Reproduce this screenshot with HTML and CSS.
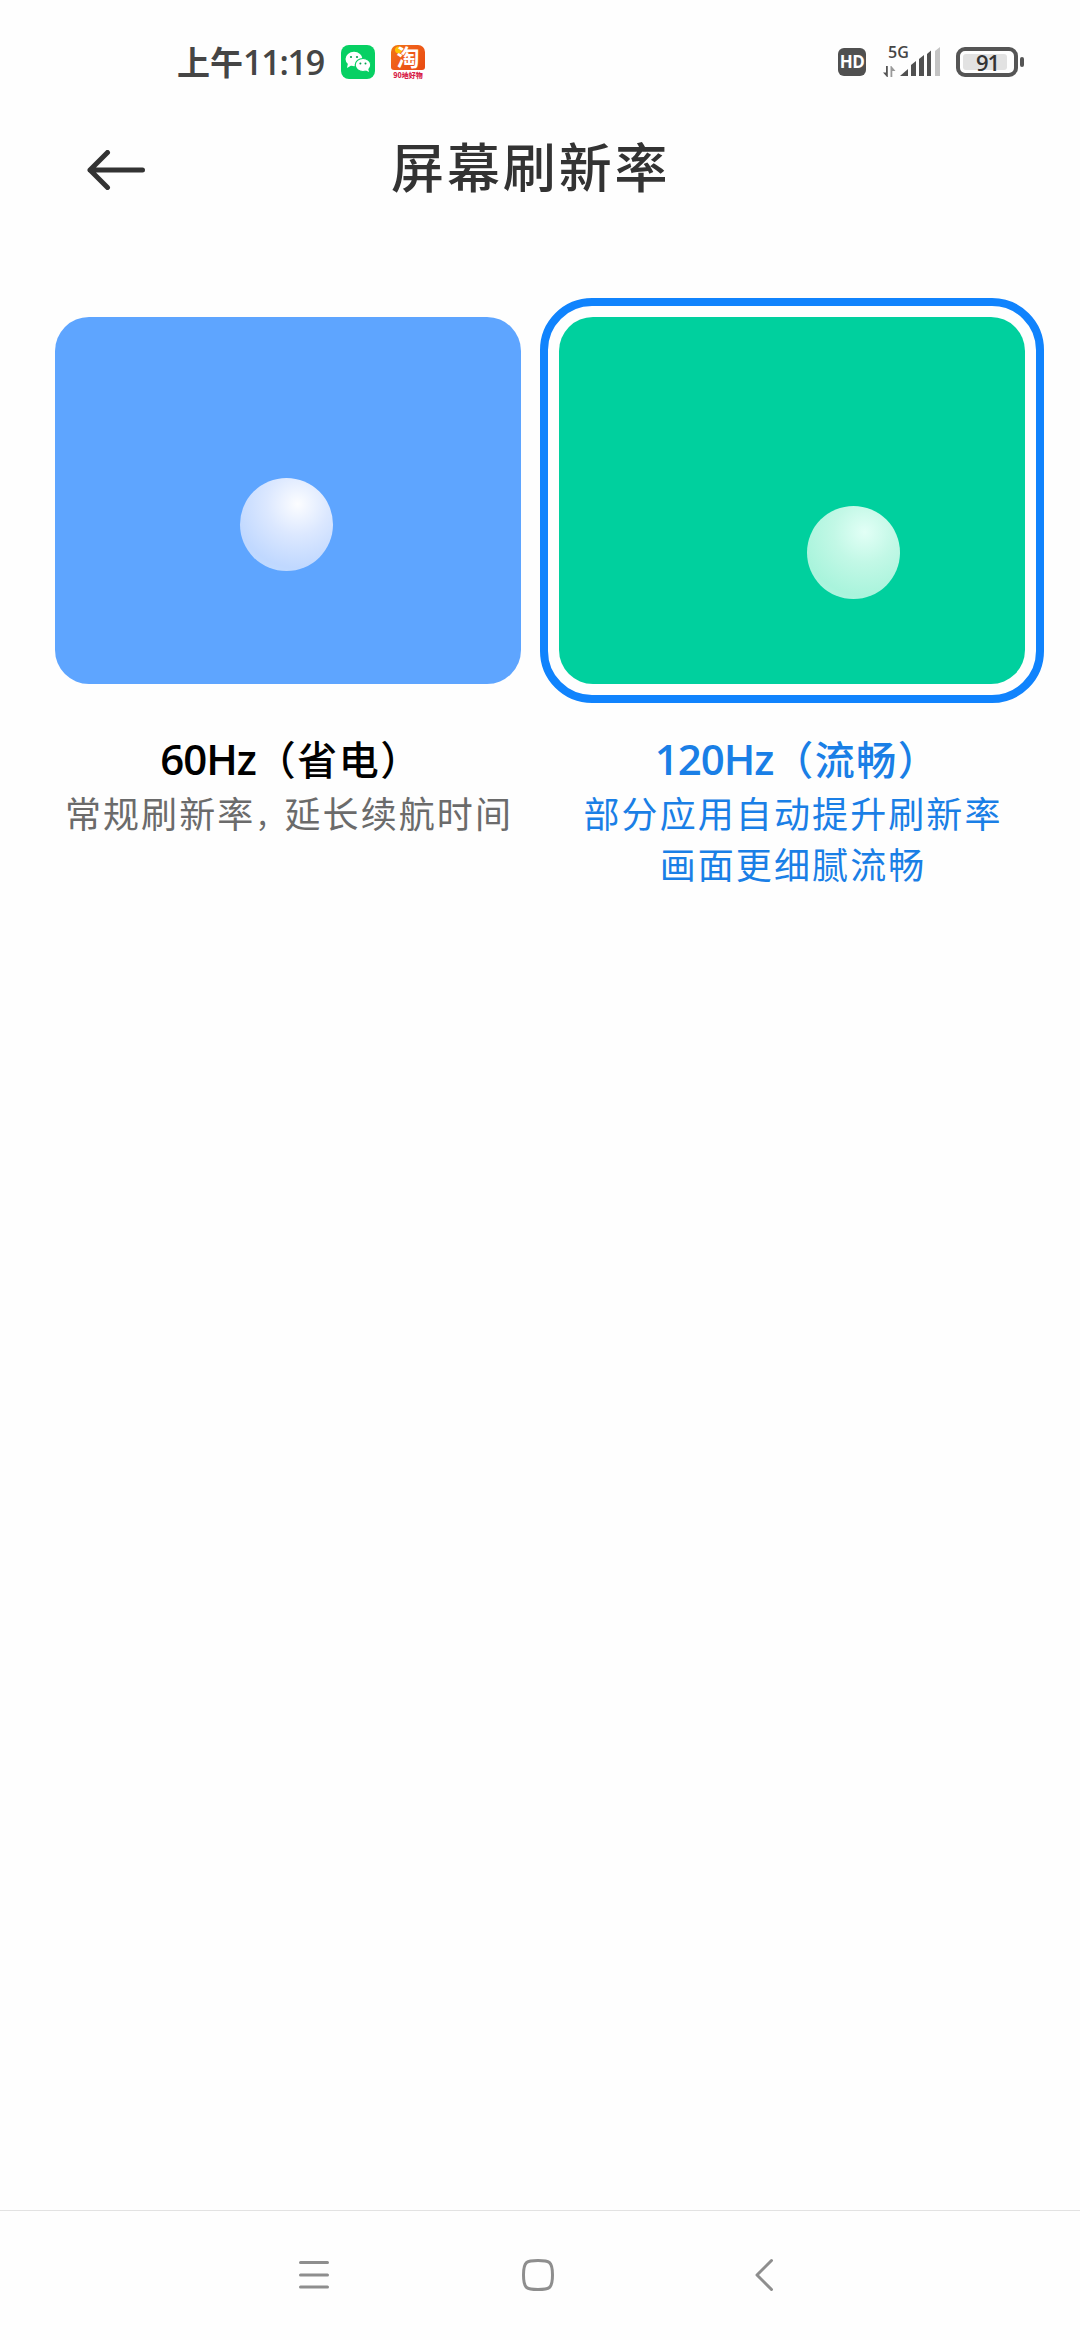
FILE: index.html
```html
<!DOCTYPE html>
<html lang="zh-CN">
  <head>
    <meta charset="UTF-8" />
    <meta name="viewport" content="width=device-width, initial-scale=1.0" />
    <title>屏幕刷新率</title>
    <link rel="stylesheet" href="styles.css">
  </head>
  <body>
    <div class="status-bar">
      <div class="status-left">
        <span class="time">上午<span class="num">11:19</span></span>
        <svg class="app-icon" viewBox="0 0 34 34">
          <rect width="34" height="34" rx="8" fill="#07d063" />
          <ellipse cx="13" cy="14" rx="8.5" ry="7.2" fill="#fff" />
          <path d="M7 18l-1 5 5-3z" fill="#fff" />
          <ellipse cx="22" cy="20" rx="7.8" ry="6.5" fill="#fff" stroke="#07d063" stroke-width="1.2" />
          <path d="M24 25l4 2-1-4z" fill="#fff" />
          <g fill="#07a050">
            <circle cx="10" cy="12" r="1.1" />
            <circle cx="16" cy="12" r="1.1" />
            <circle cx="19.4" cy="18.4" r="1" />
            <circle cx="24.5" cy="18.4" r="1" />
          </g>
        </svg>
        <div class="taobao">
          <div class="taobao-logo">淘</div>
          <div class="taobao-text">90地好物</div>
        </div>
      </div>
      <div class="status-right">
        <span class="hd">HD</span>
        <div class="signal">
          <span class="network">5G</span>
          <svg width="58" height="13" viewBox="0 0 58 13">
            <path d="M0 8.500h3V2h1.800V13H4z" fill="#555" />
            <path d="M7.500 13V2h.8l4.200 5H9.300v6z" fill="#999" />
          </svg>
          <svg class="bars" width="42" height="30" viewBox="0 0 42 30">
            <g fill="#505050">
              <path d="M1 29l8-7v7z" />
              <path d="M12 29v-11l5-4v15z" />
              <path d="M20 29v-17l5-4v21z" />
              <path d="M28 29v-22l4-3.500v25.500z" />
            </g>
            <path d="M36 29V4l5-4v29z" fill="#c4c4c4" />
          </svg>
        </div>
        <div class="battery">
          <div class="battery-body"><span class="battery-level">91</span></div>
          <div class="battery-tip"></div>
        </div>
      </div>
    </div>

    <div class="header">
      <svg class="back" viewBox="0 0 58 40">
        <path d="M20.500 2.500L3 20l17.500 17.500M3 20h52.500" />
      </svg>
      <h1>屏幕刷新率</h1>
    </div>

    <div class="options">
      <div class="option">
        <div class="frame">
          <div class="preview blue"><div class="ball"></div></div>
        </div>
        <h2><span class="num">60Hz</span>（省电）</h2>
        <p>常规刷新率<span class="comma">，</span>延长续航时间</p>
      </div>
      <div class="option selected">
        <div class="frame">
          <div class="preview green"><div class="ball"></div></div>
        </div>
        <h2><span class="num">120Hz</span>（流畅）</h2>
        <p>部分应用自动提升刷新率<br>画面更细腻流畅</p>
      </div>
    </div>

    <div class="nav-bar">
      <svg width="32" height="34" viewBox="0 0 32 34">
        <path d="M2.500 4.500h27M2.500 17h27M2.500 29h27" />
      </svg>
      <svg class="home" width="34" height="34" viewBox="0 0 34 34">
        <path d="M17 2.500C28 2.500 31.500 3 31.500 17S28 31.500 17 31.500 2.500 31 2.500 17 6 2.500 17 2.500z" />
      </svg>
      <svg width="20" height="34" viewBox="0 0 20 34">
        <path d="M17.500 2.500L3 17l14.500 14.500" />
      </svg>
    </div>
  </body>
</html>
```

FILE: styles.css
```css
* {
  box-sizing: border-box;
}
body {
  margin: 0;
  height: 2340px;
  display: flex;
  flex-direction: column;
  background-color: #fefefe;
  font-family: "Noto Sans CJK SC", sans-serif;
  overflow: hidden;
}
.num {
  font-family: "Open Sans", sans-serif;
  font-weight: 600;
}
.status-bar {
  height: 124px;
  padding: 0 56px 0 177px;
  display: flex;
  justify-content: space-between;
}
.status-left {
  display: flex;
  align-items: center;
}
.time {
  width: 164px;
  margin-top: -2px;
  font-size: 33px;
  line-height: 48px;
  font-weight: 700;
  color: #454545;
  white-space: nowrap;
}
.time .num {
  font-size: 34px;
  font-weight: 600;
  letter-spacing: -1.200px;
}
.app-icon {
  width: 34px;
  height: 34px;
}
.taobao {
  width: 34px;
  height: 34px;
  margin-left: 16px;
}
.taobao-logo {
  height: 25px;
  border-radius: 7px 7px 3px 3px;
  background: radial-gradient(circle at 22% 20%, #ffc400 0 3px, transparent 4px), linear-gradient(135deg, #f07a10 0%, #f0601a 35%, #e84a10 100%);
  color: #fff;
  font-size: 23px;
  font-weight: 700;
  line-height: 22px;
  text-align: center;
}
.taobao-text {
  color: #d81e4a;
  font-size: 7px;
  font-weight: 900;
  line-height: 10px;
  text-align: center;
  white-space: nowrap;
}
.status-right {
  display: flex;
  align-items: center;
}
.hd {
  width: 28px;
  height: 28px;
  border-radius: 6px;
  background-color: #505050;
  color: #fff;
  font: 700 17px/28px "Open Sans", sans-serif;
  text-align: center;
  letter-spacing: -0.5px;
}
.signal {
  position: relative;
  width: 58px;
  height: 30px;
  margin: 0 15px 0 17px;
  display: flex;
  flex-direction: column;
  justify-content: space-between;
}
.network {
  padding-left: 5px;
  font: 600 16px/11px "Open Sans", sans-serif;
  color: #454545;
}
.bars {
  position: absolute;
  right: 0;
  top: 0;
}
.battery {
  display: flex;
  align-items: center;
  gap: 2px;
}
.battery-body {
  width: 62px;
  height: 30px;
  padding: 3px;
  border: 4px solid #555;
  border-radius: 9px;
}
.battery-level {
  display: block;
  width: 44px;
  height: 16px;
  padding-left: 5px;
  border-radius: 3px;
  background-color: #e2e2e2;
  color: #333;
  font: 600 22px/16px "Open Sans", sans-serif;
  letter-spacing: -1px;
  text-align: center;
}
.battery-tip {
  width: 4px;
  height: 10px;
  border-radius: 2px;
  background-color: #555;
}
.header {
  height: 174px;
  padding: 0 87px;
  display: flex;
  align-items: flex-start;
}
.back {
  width: 58px;
  height: 40px;
  margin-top: 26px;
  fill: none;
  stroke: #333;
  stroke-width: 5;
  stroke-linecap: round;
  stroke-linejoin: round;
}
h1 {
  margin: 1px 0 0 246px;
  font-size: 53px;
  font-weight: 500;
  line-height: 80px;
  letter-spacing: 2.900px;
  color: #333;
}
.options {
  flex: 1;
  padding: 0 36px;
  display: flex;
}
.option {
  width: 504px;
  text-align: center;
}
.frame {
  height: 405px;
  padding: 11px;
  border: 8px solid transparent;
  border-radius: 52px;
}
.selected .frame {
  border-color: #1083fd;
}
.preview {
  height: 367px;
  border-radius: 34px;
}
.blue {
  padding: 161px 0 0 185px;
  background-color: #5ea5ff;
}
.green {
  padding: 189px 0 0 248px;
  background-color: #00d09e;
}
.ball {
  width: 93px;
  height: 93px;
  border-radius: 50%;
}
.blue .ball {
  background: radial-gradient(circle at 62% 28%, #fcfdff 0%, #dce8ff 35%, #c0d8ff 72%, #c0dfff 100%);
}
.green .ball {
  background: radial-gradient(circle at 62% 28%, #e2fff6 0%, #c2f8e6 35%, #a9f4dc 72%, #bcf4e6 100%);
}
h2 {
  margin: 28px 0 0;
  padding-left: 6px;
  font-size: 40px;
  font-weight: 500;
  line-height: 54px;
  letter-spacing: 1.500px;
  color: #000;
  white-space: nowrap;
}
h2 .num {
  font-size: 42px;
  letter-spacing: -1px;
}
.selected h2 {
  padding-left: 10px;
}
p {
  margin: 1px 0 0;
  padding-left: 2px;
  font-size: 36px;
  line-height: 51px;
  letter-spacing: 2.100px;
  color: #6b6b6b;
  white-space: nowrap;
}
.comma {
  font-size: 29px;
  letter-spacing: 0;
}
.selected h2,
.selected p {
  color: #1a7fe6;
}
.nav-bar {
  height: 130px;
  padding: 0 306px 1px 298px;
  border-top: 1px solid #e2e2e2;
  display: flex;
  justify-content: space-between;
  align-items: center;
}
.nav-bar svg {
  fill: none;
  stroke: #8e8e8e;
  stroke-width: 3;
  stroke-linecap: round;
  stroke-linejoin: round;
}
.nav-bar .home {
  margin-right: 9px;
}
```
